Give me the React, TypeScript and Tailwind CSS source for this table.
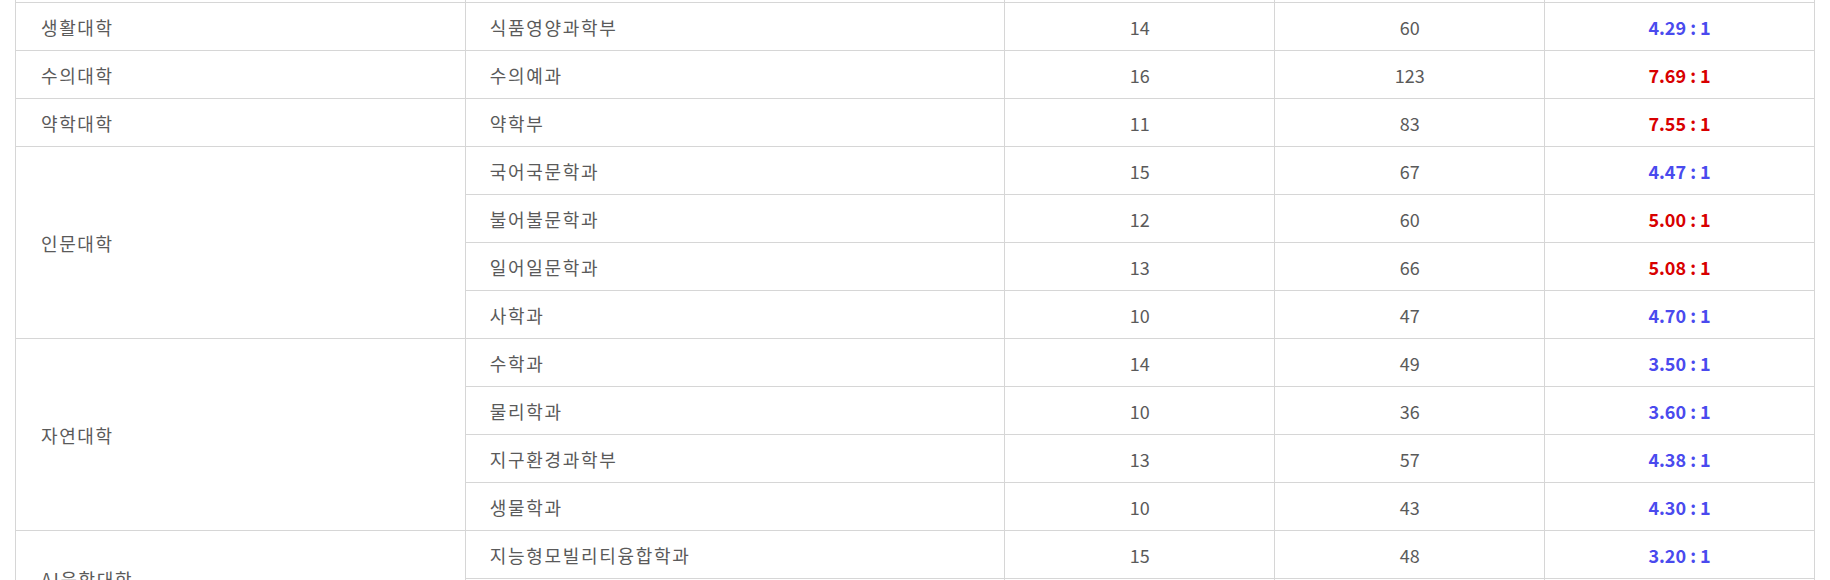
import React from "react";

type Row = { college?: string; span?: number; major: string; quota: number; applicants: number; ratio: string; hot?: boolean };

const rows: Row[] = [
  { college: "생활대학", span: 1, major: "식품영양과학부", quota: 14, applicants: 60, ratio: "4.29 : 1" },
  { college: "수의대학", span: 1, major: "수의예과", quota: 16, applicants: 123, ratio: "7.69 : 1", hot: true },
  { college: "약학대학", span: 1, major: "약학부", quota: 11, applicants: 83, ratio: "7.55 : 1", hot: true },
  { college: "인문대학", span: 4, major: "국어국문학과", quota: 15, applicants: 67, ratio: "4.47 : 1" },
  { major: "불어불문학과", quota: 12, applicants: 60, ratio: "5.00 : 1", hot: true },
  { major: "일어일문학과", quota: 13, applicants: 66, ratio: "5.08 : 1", hot: true },
  { major: "사학과", quota: 10, applicants: 47, ratio: "4.70 : 1" },
  { college: "자연대학", span: 4, major: "수학과", quota: 14, applicants: 49, ratio: "3.50 : 1" },
  { major: "물리학과", quota: 10, applicants: 36, ratio: "3.60 : 1" },
  { major: "지구환경과학부", quota: 13, applicants: 57, ratio: "4.38 : 1" },
  { major: "생물학과", quota: 10, applicants: 43, ratio: "4.30 : 1" },
  { college: "AI융합대학", span: 2, major: "지능형모빌리티융합학과", quota: 15, applicants: 48, ratio: "3.20 : 1" },
  { major: "인공지능융합학과", quota: 14, applicants: 52, ratio: "3.71 : 1" },
];

const cell = "border border-[#d6d6d6] h-12 p-0 pt-[2px]";

export default function App() {
  return (
    <div className="w-full h-[580px] overflow-hidden bg-white px-[15px]">
      <table
        className="w-full table-fixed border-collapse text-[18px] text-[#5a5a5a]"
        style={{ fontFamily: '"Malgun Gothic", "Noto Sans CJK KR", "Noto Sans", sans-serif' }}
      >
        <colgroup>
          <col className="w-[25%]" />
          <col className="w-[30%]" />
          <col className="w-[15%]" />
          <col className="w-[15%]" />
          <col className="w-[15%]" />
        </colgroup>
        <tbody>
          <tr className="h-[2px]">
            <td className="border-x border-[#d6d6d6] p-0" />
            <td className="border-x border-[#d6d6d6] p-0" />
            <td className="border-x border-[#d6d6d6] p-0" />
            <td className="border-x border-[#d6d6d6] p-0" />
            <td className="border-x border-[#d6d6d6] p-0" />
          </tr>
          {rows.map((r, i) => (
            <tr key={i}>
              {r.college && (
                <td rowSpan={r.span} className={`${cell} pl-[25px] align-middle tracking-[1.6px]`}>
                  {r.college}
                </td>
              )}
              <td className={`${cell} pl-[24px] tracking-[1.7px]`}>{r.major}</td>
              <td className={`${cell} text-center`}>{r.quota}</td>
              <td className={`${cell} text-center`}>{r.applicants}</td>
              <td
                className={`${cell} text-center font-bold ${r.hot ? "text-[#d80000]" : "text-[#4a4aee]"}`}
              >
                {r.ratio}
              </td>
            </tr>
          ))}
        </tbody>
      </table>
    </div>
  );
}
